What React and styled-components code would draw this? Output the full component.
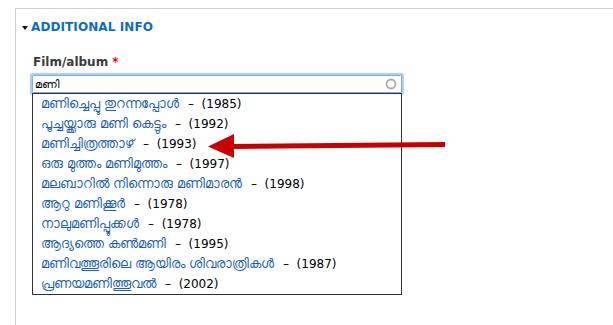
import React from "react";
import styled, { createGlobalStyle } from "styled-components";

const films = [
  { title: "മണിച്ചെപ്പു തുറന്നപ്പോൾ", year: 1985 },
  { title: "പൂച്ചയ്ക്കാരു മണി കെട്ടും", year: 1992 },
  { title: "മണിച്ചിത്രത്താഴ്", year: 1993 },
  { title: "ഒരു മുത്തം മണിമുത്തം", year: 1997 },
  { title: "മലബാറിൽ നിന്നൊരു മണിമാരൻ", year: 1998 },
  { title: "ആറു മണിക്കൂർ", year: 1978 },
  { title: "നാലുമണിപ്പൂക്കൾ", year: 1978 },
  { title: "ആദ്യത്തെ കൺമണി", year: 1995 },
  { title: "മണിവത്തൂരിലെ ആയിരം ശിവരാത്രികൾ", year: 1987 },
  { title: "പ്രണയമണിത്തൂവൽ", year: 2002 },
];

const GlobalStyle = createGlobalStyle`
  html, body {
    margin: 0;
    padding: 0;
    background: #fff;
  }
  body {
    font-family: "DejaVu Sans", "Noto Sans", sans-serif;
    font-size: 12px;
    color: #333;
  }
`;

const Page = styled.div`
  position: relative;
  width: 613px;
  height: 325px;
  overflow: hidden;
  padding: 8px 0 0 15px;
  box-sizing: border-box;
`;

const Fieldset = styled.div`
  border-top: 1px solid #cfcfcf;
  border-left: 1px solid #cfcfcf;
  height: 330px;
  padding: 10px 0 0 6px;
  box-sizing: border-box;
`;

const Legend = styled.div`
  display: flex;
  align-items: center;
  gap: 3px;
  height: 16px;
  line-height: 16px;
  font-weight: bold;
  color: #0a6fc2;
  letter-spacing: 0.1px;
`;

const Caret = styled.span`
  width: 0;
  height: 0;
  border-left: 3.5px solid transparent;
  border-right: 3.5px solid transparent;
  border-top: 4px solid #111;
  margin-top: 1px;
`;

const Field = styled.div`
  position: relative;
  margin: 19px 0 0 10px;
  width: 370px;
`;

const Label = styled.div`
  height: 16px;
  line-height: 16px;
  font-weight: bold;
  color: #3b3b3b;
  padding-left: 1px;
`;

const Star = styled.span`
  color: #e00;
  margin-left: 4px;
`;

const InputBox = styled.div`
  margin-top: 5px;
  height: 18px;
  box-sizing: border-box;
  border: 1px solid #7aaeea;
  box-shadow: 0 0 1px 2px #a9cdf7;
  border-radius: 1px;
  display: flex;
  align-items: center;
  justify-content: space-between;
  padding: 0 4px 0 2px;
  font-size: 11px;
  color: #000;
`;

const Throbber = styled.svg`
  display: block;
`;

const Dropdown = styled.ul`
  position: absolute;
  left: 0;
  top: 39px;
  width: 370px;
  box-sizing: border-box;
  margin: 0;
  padding: 0;
  list-style: none;
  border: 1px solid #333;
  background: #fff;
`;

const Item = styled.li`
  height: 20px;
  line-height: 20px;
  padding-left: 8px;
  white-space: nowrap;
`;

const Title = styled.span`
  color: #1d5fb0;
  font-size: 12.5px;
`;

const Year = styled.span`
  color: #000;
  margin-left: 9px;
`;

const Arrow = styled.svg`
  position: absolute;
  left: 0;
  top: 0;
  pointer-events: none;
`;

export default function App() {
  return (
    <>
      <GlobalStyle />
      <Page>
        <Fieldset>
          <Legend>
            <Caret />
            ADDITIONAL INFO
          </Legend>
          <Field>
            <Label>
              Film/album<Star>*</Star>
            </Label>
            <InputBox>
              <span>മണി</span>
              <Throbber width="12" height="12" viewBox="0 0 12 12">
                <circle cx="6" cy="6" r="4.5" fill="none" stroke="#aaa" strokeWidth="1.8" />
              </Throbber>
            </InputBox>
            <Dropdown>
              {films.map((f) => (
                <Item key={f.title}>
                  <Title>{f.title}</Title>
                  <Year>–&nbsp;&nbsp;({f.year})</Year>
                </Item>
              ))}
            </Dropdown>
          </Field>
        </Fieldset>
        <Arrow width="613" height="325" viewBox="0 0 613 325">
          <path d="M445 144.5 L230 146.5" stroke="#c80000" strokeWidth="5" fill="none" />
          <polygon points="208,146.5 234,134 234,158" fill="#c80000" />
        </Arrow>
      </Page>
    </>
  );
}
